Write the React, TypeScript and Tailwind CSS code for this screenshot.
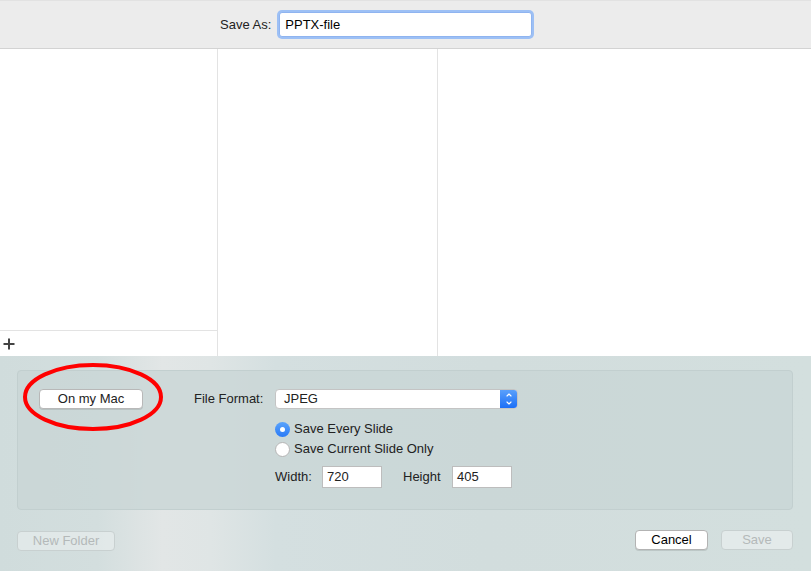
import { ChevronDown, ChevronUp } from 'lucide-react';

const font = { fontFamily: '"Liberation Sans", Arial, sans-serif' };

const SaveDialog = () => {
  return (
    <div className="w-[811px] h-[571px] flex flex-col text-[13px] text-[#222] overflow-hidden" style={font}>
      {/* Save As bar */}
      <div className="h-[49px] shrink-0 bg-[#ececec] border-t border-t-[#e2e2e2] border-b border-b-[#d3d3d3] flex items-center pl-[220px]">
        <span className="mr-[8px]">Save As:</span>
        <div className="w-[253px] h-[25px] bg-white border border-[#8fb4f0] rounded-[3px] ring-[2px] ring-[#9dc0f5] flex items-center pl-[5px] text-[13px] text-black">
          PPTX-file
        </div>
      </div>

      {/* Browser columns */}
      <div className="h-[307px] shrink-0 flex bg-white">
        <div className="w-[218px] border-r border-[#e3e3e3] flex flex-col">
          <div className="flex-1" />
          <div className="h-[26px] border-t border-[#e3e3e3] flex items-center pl-[2px]">
            <svg width="14" height="14" viewBox="0 0 14 14">
              <path d="M7 1.5v11M1.5 7h11" stroke="#444" strokeWidth="2" />
            </svg>
          </div>
        </div>
        <div className="w-[220px] border-r border-[#e3e3e3]" />
        <div className="flex-1" />
      </div>

      {/* Bottom accessory area */}
      <div className="relative flex-1 flex flex-col pl-[17px] pr-[18px] pt-[14px] bg-[linear-gradient(90deg,#d0dcdc_0%,#d3dede_12%,#e2e6e6_20%,#dfe5e5_26%,#d4dfe0_34%,#d2dddd_60%,#d3dfde_100%)]">
        <div className="h-[140px] rounded-[4px] border border-[#c2cfcf] bg-[#c9d6d6]/80 flex pt-[18px] pl-[21px]">
          <div className="w-[104px] h-[20px] bg-white border border-[#b8b8b8] rounded-[4px] shadow-[0_1px_0_rgba(0,0,0,0.1)] flex items-center justify-center">
            On my Mac
          </div>

          <div className="ml-[51px] flex flex-col">
            <div className="flex items-center h-[20px]">
              <span className="w-[81px] text-[#222]">File Format:</span>
              <div className="w-[243px] h-[20px] bg-white border border-[#c4c4c4] rounded-[4px] flex items-center overflow-hidden">
                <span className="flex-1 pl-[8px]">JPEG</span>
                <div className="w-[17px] h-full bg-[linear-gradient(#5aa0fb,#1c6ff7)] flex flex-col items-center justify-center text-white">
                  <ChevronUp size={8} strokeWidth={3.5} />
                  <ChevronDown size={8} strokeWidth={3.5} />
                </div>
              </div>
            </div>

            <div className="ml-[81px] mt-[12px] flex flex-col gap-[4px]">
              <div className="flex items-center h-[16px]">
                <div className="w-[15px] h-[15px] rounded-full bg-[linear-gradient(#5aa3fb,#2b7bf7)] flex items-center justify-center">
                  <div className="w-[5px] h-[5px] rounded-full bg-white" />
                </div>
                <span className="ml-[4px]">Save Every Slide</span>
              </div>
              <div className="flex items-center h-[16px]">
                <div className="w-[15px] h-[15px] rounded-full bg-white border border-[#b5b5b5]" />
                <span className="ml-[4px]">Save Current Slide Only</span>
              </div>
              <div className="flex items-center mt-[5px]">
                <span className="w-[47px]">Width:</span>
                <div className="w-[60px] h-[22px] bg-white border border-[#bdbdbd] flex items-center pl-[4px]">720</div>
                <span className="ml-[21px] w-[49px]">Height</span>
                <div className="w-[60px] h-[22px] bg-white border border-[#bdbdbd] flex items-center pl-[4px]">405</div>
              </div>
            </div>
          </div>
        </div>

        <div className="mt-[20px] flex items-start">
          <div className="mt-[1px] w-[98px] h-[20px] border border-[#c8d0d0] rounded-[4px] bg-[#e7ecec]/70 text-[#b4b9b9] flex items-center justify-center">
            New Folder
          </div>
          <div className="flex-1" />
          <div className="w-[73px] h-[20px] bg-white border border-[#b3b3b3] rounded-[4px] shadow-[0_1px_0_rgba(0,0,0,0.1)] text-black flex items-center justify-center">
            Cancel
          </div>
          <div className="ml-[13px] w-[72px] h-[20px] border border-[#c8d0d0] rounded-[4px] bg-[#e3eaea] text-[#b4b9b9] flex items-center justify-center">
            Save
          </div>
        </div>

        {/* red annotation ellipse */}
        <svg className="absolute left-[20px] top-[6px]" width="150" height="72" viewBox="0 0 150 72">
          <ellipse cx="73" cy="35" rx="68" ry="32" fill="none" stroke="#ff0000" strokeWidth="4" />
        </svg>
      </div>
    </div>
  );
};

export default function App() {
  return <SaveDialog />;
}
